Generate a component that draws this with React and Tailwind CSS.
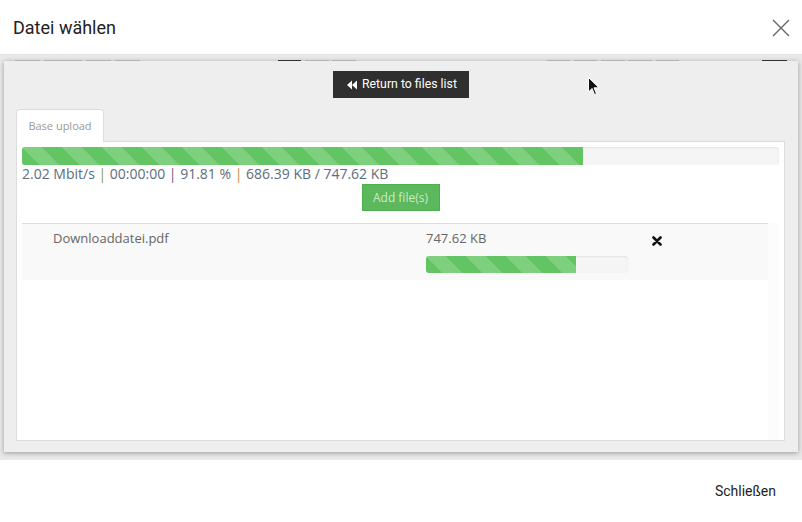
import React from "react";

const stripes =
  "bg-[linear-gradient(45deg,rgba(255,255,255,.18)_25%,transparent_25%,transparent_50%,rgba(255,255,255,.18)_50%,rgba(255,255,255,.18)_75%,transparent_75%,transparent)] bg-[length:40px_40px]";

function Progress({ pct, className }) {
  return (
    <div className={"rounded-[3px] bg-[#f5f5f5] shadow-[inset_0_1px_2px_rgba(0,0,0,0.08)] overflow-hidden " + className}>
      <div className={"h-full bg-[#62c462] " + stripes} style={{ width: pct + "%" }} />
    </div>
  );
}

const dashes = [
  [15, 25, "#b3b3b3"], [44, 38, "#b3b3b3"], [86, 25, "#b3b3b3"], [115, 25, "#b3b3b3"],
  [278, 23, "#333"], [305, 24, "#b3b3b3"], [332, 24, "#b3b3b3"],
  [547, 23, "#b3b3b3"], [574, 23, "#b3b3b3"], [601, 24, "#b3b3b3"], [628, 24, "#b3b3b3"], [656, 23, "#b3b3b3"],
  [762, 25, "#333"],
];

export default function App() {
  return (
    <div className="w-[802px] h-[522px] bg-white flex flex-col relative overflow-hidden font-['Roboto',sans-serif]">
      {/* header */}
      <div className="h-[55px] shrink-0 flex items-center justify-between pl-[13px] pr-[12px] border-b border-[#e2e2e2]">
        <div className="text-[18px] text-[#222]">Datei wählen</div>
        <svg width="18" height="18" viewBox="0 0 18 18" className="mt-[1px]">
          <path d="M1 1 L17 17 M17 1 L1 17" stroke="#666" strokeWidth="1.4" fill="none" />
        </svg>
      </div>

      {/* body */}
      <div className="h-[405px] shrink-0 bg-[#e9e9e9] flex flex-col px-[4px]">
        <div className="h-[6px] shrink-0 relative">
          {dashes.map(([x, w, c], i) => (
            <div key={i} className="absolute bottom-0 h-[1px]" style={{ left: x - 4, width: w, background: c }} />
          ))}
        </div>
        <div className="h-[391px] bg-[#eeeeee] shadow-[0_1px_5px_rgba(0,0,0,0.35)] flex flex-col pt-[10px] pl-[12px] pr-[13px] pb-[11px]">
          <div className="flex justify-center">
            <div className="h-[27px] w-[136px] bg-[#2f2f2f] text-white text-[12.3px] flex items-center pl-[14px] gap-[5px] ml-[1px]">
              <svg width="10" height="10" viewBox="0 0 11 10">
                <path d="M5.5 0 L0 5 L5.5 10 Z M11 0 L5.5 5 L11 10 Z" fill="#fff" />
              </svg>
              <span>Return to files list</span>
            </div>
          </div>
          <div className="mt-[11px] flex font-['Open_Sans',sans-serif]">
            <div className="h-[33px] w-[88px] bg-white border border-[#ddd] border-b-0 rounded-t-[4px] text-[11px] text-[#999] flex items-center justify-center relative z-10 -mb-[1px] pt-[1px]">
              Base upload
            </div>
          </div>
          <div className="flex-1 bg-white border border-[#ddd] font-['Open_Sans',sans-serif] flex flex-col pt-[5px] px-[5px]">
            <Progress pct={74.1} className="h-[18px]" />
            <div className="text-[14px] leading-[18px] text-[#5d6d7e] mt-[0px]">
              2.02 Mbit/s <span className="text-[#8fa046]">|</span> 00:00:00{" "}
              <span className="text-[#6a5a8e]">|</span> 91.81 %{" "}
              <span className="text-[#d08a4c]">|</span> 686.39 KB / 747.62 KB
            </div>
            <div className="flex justify-center mt-[1px]">
              <div className="h-[27px] w-[78px] bg-[#5cb85c] border border-[#4cae4c] text-[12px] text-[#c9ecc9] flex items-center justify-center">
                Add file(s)
              </div>
            </div>
            <div className="flex mt-[12px]">
              <div className="w-[746px] h-[57px] bg-[#f9f9f9] border-t border-[#ddd] flex text-[13px] text-[#666]">
                <div className="w-[404px] pl-[31px] pt-[5px]">Downloaddatei.pdf</div>
                <div className="w-[226px] pt-[5px] flex flex-col">
                  <div className="leading-[18px]">747.62 KB</div>
                  <Progress pct={74.1} className="h-[17px] w-[202px] mt-[9px]" />
                </div>
                <div className="pt-[12px]">
                  <svg width="10" height="10" viewBox="0 0 10 10">
                    <path d="M1.5 1.5 L8.5 8.5 M8.5 1.5 L1.5 8.5" stroke="#111" strokeWidth="2.6" strokeLinecap="round" />
                  </svg>
                </div>
              </div>
              <div className="flex-1 bg-[#fcfcfc]" />
            </div>
            <div className="flex-1 flex">
              <div className="w-[746px]" />
              <div className="flex-1 bg-[#fcfcfc]" />
            </div>
          </div>
        </div>
      </div>

      {/* footer */}
      <div className="flex-1 flex justify-end items-start pt-[21px] pr-[26px]">
        <div className="text-[14px] text-[#222]">Schließen</div>
      </div>

      {/* mouse cursor */}
      <svg className="absolute left-[588px] top-[77px]" width="12" height="19" viewBox="0 0 12 19">
        <path d="M0.5 0.5 L0.5 15 L4 11.5 L6.5 17.5 L8.5 16.7 L6 10.8 L11 10.8 Z" fill="#111" stroke="#fff" strokeWidth="1" />
      </svg>
    </div>
  );
}
